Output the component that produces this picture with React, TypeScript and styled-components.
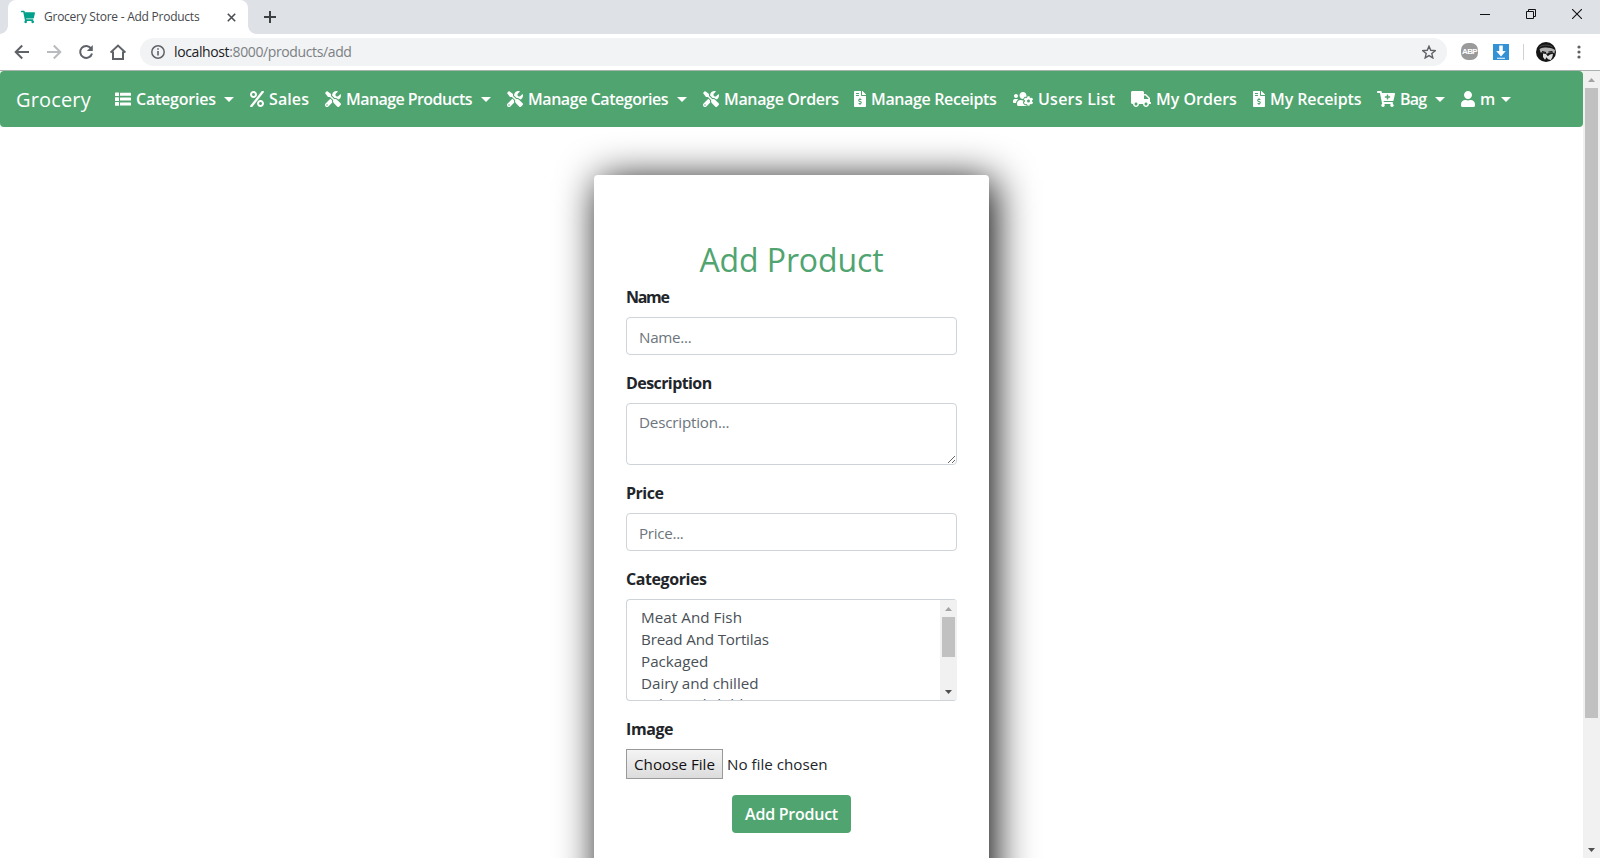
import React from 'react';
import styled, { createGlobalStyle } from 'styled-components';
import {
  FaPercent,
  FaTools,
  FaFileInvoiceDollar,
  FaUsersCog,
  FaTruck,
  FaCartPlus,
  FaUser,
  FaShoppingCart,
} from 'react-icons/fa';

const green = '#50a46f';
const comic = '"Comic Sans MS", "Open Sans", sans-serif';
const segoe = '"Segoe UI", "Open Sans", sans-serif';

const GlobalStyle = createGlobalStyle`
  *, *::before, *::after { box-sizing: border-box; }
  body { margin: 0; background: #fff; font-family: ${segoe}; overflow: hidden; }
`;

const Window = styled.div`
  display: flex;
  flex-direction: column;
  width: 1600px;
  height: 858px;
  overflow: hidden;
`;

/* ---------- browser frame ---------- */

const TabStrip = styled.div`
  display: flex;
  height: 34px;
  padding-left: 8px;
  background: #dee1e6;
`;

const Tab = styled.div`
  position: relative;
  display: flex;
  align-items: center;
  width: 240px;
  height: 34px;
  padding: 0 12px 0 13px;
  background: #fff;
  border-radius: 8px 8px 0 0;
  color: #00a08a;

  &::before,
  &::after {
    content: '';
    position: absolute;
    bottom: 0;
    width: 8px;
    height: 8px;
  }
  &::before {
    left: -8px;
    background: radial-gradient(circle at 0 0, transparent 7.5px, #fff 8px);
  }
  &::after {
    right: -8px;
    background: radial-gradient(circle at 100% 0, transparent 7.5px, #fff 8px);
  }
`;

const TabTitle = styled.span`
  flex: 1;
  margin-left: 9px;
  color: #45494d;
  font-size: 12px;
  letter-spacing: -0.25px;
  line-height: 34px;
  white-space: nowrap;
`;

const NewTab = styled.div`
  display: flex;
  align-items: center;
  padding-left: 16px;
`;

const WindowButtons = styled.div`
  display: flex;
  gap: 36px;
  height: 28px;
  margin-left: auto;
  padding-right: 18px;
  align-items: center;
`;

const Toolbar = styled.div`
  display: flex;
  align-items: center;
  height: 37px;
  padding: 0 0 1px 14px;
  background: #fff;
  border-bottom: 1px solid #a9b3ae;
`;

const NavButtons = styled.div`
  display: flex;
  gap: 16px;
  margin-right: 14px;
`;

const AddressBar = styled.div`
  display: flex;
  align-items: center;
  width: 1307px;
  height: 28px;
  padding: 0 11px 0 11px;
  border-radius: 14px;
  background: #f1f3f4;
`;

const Url = styled.span`
  flex: 1;
  margin-left: 9px;
  color: #7c8084;
  font-size: 14px;
  letter-spacing: -0.38px;
  line-height: 28px;

  b {
    color: #202124;
    font-weight: 400;
  }
`;

const Extensions = styled.div`
  display: flex;
  align-items: center;
  margin-left: 14px;
`;

const Divider = styled.div`
  width: 1px;
  height: 16px;
  margin: 0 12px 0 14px;
  background: #cfd1d4;
`;

const AdBadge = styled.span`
  display: flex;
  align-items: center;
  justify-content: center;
  width: 17px;
  height: 17px;
  margin-right: 15px;
  border-radius: 7px;
  background: #9a9a9a;
  color: #fff;
  font: 700 8px 'Liberation Sans', sans-serif;
  letter-spacing: -0.6px;
`;

/* ---------- page ---------- */

const Viewport = styled.div`
  display: flex;
  flex: 1;
  min-height: 0;
`;

const Page = styled.div`
  flex: 1;
  overflow: hidden;
`;

const NavBar = styled.nav`
  display: flex;
  align-items: center;
  height: 56px;
  padding: 0 16px;
  border-radius: 4px;
  background: ${green};
  color: #fff;
  font-family: ${comic};
`;

const Brand = styled.span`
  width: 75px;
  margin-right: 16px;
  font-size: 20px;
  font-weight: 500;
  letter-spacing: 0.15px;
  line-height: 30px;
  padding-top: 1px;
`;

const NavItem = styled.span`
  display: flex;
  align-items: center;
  padding: 0 8px;
`;

const NavIcon = styled.span<{ $width: number }>`
  display: flex;

  svg {
    width: ${(p) => p.$width}px;
    height: 16px;
  }
`;

const NavText = styled.span<{ $width: number; $spacing: number }>`
  width: ${(p) => p.$width}px;
  margin-left: 5px;
  font-size: 16px;
  font-weight: 600;
  line-height: 24px;
  letter-spacing: ${(p) => p.$spacing}px;
  white-space: nowrap;
`;

const Caret = styled.span`
  margin-left: 9px;
  border: 5px solid transparent;
  border-top-color: #fff;
  border-bottom: 0;
`;

const Card = styled.form`
  width: 395px;
  height: 760px;
  margin: 48px auto 0;
  padding: 64px 32px;
  border-radius: 4px;
  background: #fff;
  box-shadow: 5px 5px 40px #000;
`;

const Title = styled.h2`
  margin: 0 0 6px;
  padding-top: 2px;
  color: ${green};
  font: 400 32px/38px ${comic};
  letter-spacing: -0.1px;
  text-align: center;
`;

const Field = styled.div`
  display: flex;
  flex-direction: column;
  margin-bottom: 16px;
`;

const Label = styled.label<{ $spacing: number }>`
  margin-bottom: 8px;
  color: #212529;
  font: 700 16px/24px ${comic};
  letter-spacing: ${(p) => p.$spacing}px;
`;

const Input = styled.input`
  height: 38px;
  padding: 7px 12px 5px;
  border: 1px solid #ced4da;
  border-radius: 4px;
  font: 400 15.2px/24px ${segoe};
  letter-spacing: -0.3px;
  outline: 0;

  &::placeholder { color: #6c757d; opacity: 1; }
`;

const TextArea = styled.textarea`
  height: 62px;
  padding: 6px 12px;
  border: 1px solid #ced4da;
  border-radius: 4px;
  font: 400 15.2px/24px ${segoe};
  letter-spacing: -0.2px;
  outline: 0;
  resize: vertical;

  &::placeholder { color: #6c757d; opacity: 1; }
`;

const ListBox = styled.div`
  display: flex;
  height: 102px;
  border: 1px solid #ced4da;
  border-right: 0;
  border-radius: 4px;
  overflow: hidden;
`;

const Options = styled.div`
  flex: 1;
  padding: 6px 14px;
`;

const Option = styled.div<{ $spacing?: number; $rise?: number }>`
  margin-top: ${(p) => -(p.$rise ?? 0)}px;
  color: #495057;
  font-size: 15.2px;
  line-height: 22px;
  letter-spacing: ${(p) => p.$spacing ?? 0}px;
`;

const Track = styled.div`
  display: flex;
  flex-direction: column;
  align-items: center;
  width: 17px;
  background: #f1f1f1;
`;

const ArrowCell = styled.div<{ $last?: boolean }>`
  display: flex;
  align-items: center;
  justify-content: center;
  height: 17px;
  margin-top: ${(p) => (p.$last ? 'auto' : '0')};
`;

const Thumb = styled.div<{ $height: number }>`
  width: 13px;
  height: ${(p) => p.$height}px;
  background: #c1c1c1;
`;

const FileRow = styled.div`
  display: flex;
  align-items: center;
  gap: 4px;
  height: 30px;
  color: #212529;
  font-size: 15.2px;
`;

const FileButton = styled.button`
  width: 97px;
  height: 30px;
  padding: 0;
  border: 1px solid #999;
  border-radius: 0;
  background: linear-gradient(#f4f4f4, #dcdcdc);
  color: #111;
  font: 400 15.2px/24px ${segoe};
`;

const Submit = styled.button`
  display: block;
  width: 119px;
  height: 38px;
  margin: 0 auto;
  padding: 0;
  border: 0;
  border-radius: 4px;
  background: ${green};
  color: #fff;
  font: 600 16px/24px ${comic};
  letter-spacing: -0.25px;
`;

const ListIcon = () => (
  <svg viewBox="0 0 16 16" fill="currentColor">
    <rect x="0" y="1.500" width="4" height="3.600" rx=".5" />
    <rect x="0" y="6.300" width="4" height="3.600" rx=".5" />
    <rect x="0" y="11.100" width="4" height="3.600" rx=".5" />
    <rect x="5" y="1.800" width="11" height="3" rx=".5" />
    <rect x="5" y="6.600" width="11" height="3" rx=".5" />
    <rect x="5" y="11.400" width="11" height="3" rx=".5" />
  </svg>
);

type Entry = {
  icon: React.ComponentType;
  iw: number;
  text: string;
  w: number;
  ls: number;
  caret?: boolean;
};

const entries: Entry[] = [
  { icon: ListIcon, iw: 16, text: 'Categories', w: 79, ls: -0.22, caret: true },
  { icon: FaPercent, iw: 14, text: 'Sales', w: 40, ls: 0.1 },
  { icon: FaTools, iw: 16, text: 'Manage Products', w: 126, ls: -0.57, caret: true },
  { icon: FaTools, iw: 16, text: 'Manage Categories', w: 140, ls: -0.44, caret: true },
  { icon: FaTools, iw: 16, text: 'Manage Orders', w: 114, ls: -0.34 },
  { icon: FaFileInvoiceDollar, iw: 12, text: 'Manage Receipts', w: 126, ls: -0.36 },
  { icon: FaUsersCog, iw: 20, text: 'Users List', w: 77, ls: 0.24 },
  { icon: FaTruck, iw: 20, text: 'My Orders', w: 81, ls: 0 },
  { icon: FaFileInvoiceDollar, iw: 12, text: 'My Receipts', w: 91, ls: -0.1 },
  { icon: FaCartPlus, iw: 18, text: 'Bag', w: 26, ls: -0.8, caret: true },
  { icon: FaUser, iw: 14, text: 'm', w: 12, ls: 0, caret: true },
];

const Arrow = ({ up, color }: { up?: boolean; color: string }) => (
  <svg width="7" height="4" viewBox="0 0 7 4">
    <path d={up ? 'M0 4h7L3.5 0z' : 'M0 0h7L3.5 4z'} fill={color} />
  </svg>
);

const Scrollbar = ({ thumb }: { thumb: number }) => (
  <Track>
    <ArrowCell><Arrow up color="#a3a3a3" /></ArrowCell>
    <Thumb $height={thumb} />
    <ArrowCell $last><Arrow color="#505050" /></ArrowCell>
  </Track>
);

const MenuDots = styled.svg`
  margin-left: 21px;
  fill: #5f6368;
`;

const stroke = { fill: 'none', stroke: '#5f6368', strokeWidth: 2 } as const;

const BrowserFrame = () => (
  <>
    <TabStrip>
      <Tab>
        <FaShoppingCart size={14} />
        <TabTitle>Grocery Store - Add Products</TabTitle>
        <svg width="9" height="9" viewBox="0 0 9 9">
          <path d="M.8.8l7.4 7.4M8.2.8L.8 8.2" stroke="#4a4d51" strokeWidth="1.6" />
        </svg>
      </Tab>
      <NewTab>
        <svg width="12" height="12" viewBox="0 0 12 12">
          <path d="M6 0v12M0 6h12" stroke="#3c4043" strokeWidth="2" />
        </svg>
      </NewTab>
      <WindowButtons>
        <svg width="10" height="10" viewBox="0 0 10 10">
          <path d="M0 5.5h10" stroke="#111" />
        </svg>
        <svg width="10" height="10" viewBox="0 0 10 10">
          <path d="M.5 2.5h7v7h-7zM2.5 2.5v-2h7v7h-2" fill="none" stroke="#111" />
        </svg>
        <svg width="10" height="10" viewBox="0 0 10 10">
          <path d="M0 0l10 10M10 0L0 10" stroke="#111" strokeWidth="1.1" />
        </svg>
      </WindowButtons>
    </TabStrip>
    <Toolbar>
      <NavButtons>
        <svg width="16" height="16" viewBox="0 0 16 16" {...stroke}>
          <path d="M15 8H2M8.200 1.500L1.700 8l6.500 6.500" />
        </svg>
        <svg width="16" height="16" viewBox="0 0 16 16" {...stroke} stroke="#b9bbbe">
          <path d="M1 8h13M7.800 1.500L14.300 8l-6.500 6.500" />
        </svg>
        <svg width="16" height="16" viewBox="0 0 16 16" {...stroke}>
          <path d="M13.200 4.600A6 6 0 1 0 14 9.400" />
          <path d="M14.800 1v6h-6z" fill="#5f6368" stroke="none" />
        </svg>
        <svg width="16" height="16" viewBox="0 0 16 16" {...stroke}>
          <path d="M.6 8.600L8 1.600l7.400 7M3 7.500V15h10V7.500" />
        </svg>
      </NavButtons>
      <AddressBar>
        <svg width="14" height="14" viewBox="0 0 14 14">
          <circle cx="7" cy="7" r="6.200" fill="none" stroke="#5f6368" strokeWidth="1.500" />
          <path d="M7 3.200v1.600M7 6v4.600" stroke="#5f6368" strokeWidth="1.600" />
        </svg>
        <Url><b>localhost</b>:8000/products/add</Url>
        <svg width="14" height="14" viewBox="0 0 24 24">
          <path
            d="M12 2l3 7 7.600.7-5.800 5 1.800 7.500L12 18.200l-6.600 4 1.800-7.500-5.800-5L9 9z"
            fill="none"
            stroke="#5f6368"
            strokeWidth="2.400"
          />
        </svg>
      </AddressBar>
      <Extensions>
        <AdBadge>ABP</AdBadge>
        <svg width="16" height="16" viewBox="0 0 16 16">
          <path d="M0 0h16v16H0z" fill="#3391d6" />
          <path d="M6.200 1.500h3.600v5.500h3L8 12.500 3.200 7h3zM4 13.700h8v1H4z" fill="#fff" />
        </svg>
        <Divider />
        <svg width="20" height="20" viewBox="0 0 20 20">
          <circle cx="10" cy="10" r="10" fill="#151515" />
          <path d="M3.500 7C8 5 14 5 19 8l-.5 3.500-2-1.200-4 .4-1.500 1-3-1.400-3.500.2z" fill="#b0b0b0" />
          <path d="M7 11.500l3 .5 1.800 2.200 2.200-1.700 3-.8-.6 3.300-1.600 3-2.800-.8-1.500-2-1.500 2.500-2-2.700z" fill="#dedede" />
          <path d="M6 9.600l4 .9M12.500 10l4-.4" stroke="#111" strokeWidth="1.200" />
          <path d="M3.500 5C7 2.500 13 2.500 16.500 5" fill="none" stroke="#4a4a4a" />
        </svg>
        <MenuDots width="4" height="16" viewBox="0 0 4 16">
          <circle cx="2" cy="3" r="1.600" />
          <circle cx="2" cy="8" r="1.600" />
          <circle cx="2" cy="13" r="1.600" />
        </MenuDots>
      </Extensions>
    </Toolbar>
  </>
);

export default function App() {
  return (
    <Window>
      <GlobalStyle />
      <BrowserFrame />
      <Viewport>
        <Page>
          <NavBar>
            <Brand>Grocery</Brand>
            {entries.map(({ icon: Icon, iw, text, w, ls, caret }) => (
              <NavItem key={text}>
                <NavIcon $width={iw}><Icon /></NavIcon>
                <NavText $width={w} $spacing={ls}>{text}</NavText>
                {caret && <Caret />}
              </NavItem>
            ))}
          </NavBar>
          <Card>
            <Title>Add Product</Title>
            <Field>
              <Label $spacing={-1.3}>Name</Label>
              <Input placeholder="Name..." />
            </Field>
            <Field>
              <Label $spacing={-0.58}>Description</Label>
              <TextArea placeholder="Description..." />
            </Field>
            <Field>
              <Label $spacing={-0.5}>Price</Label>
              <Input placeholder="Price..." />
            </Field>
            <Field>
              <Label $spacing={-0.42}>Categories</Label>
              <ListBox>
                <Options>
                  <Option $spacing={0.05}>Meat And Fish</Option>
                  <Option $spacing={-0.17}>Bread And Tortilas</Option>
                  <Option>Packaged</Option>
                  <Option $spacing={-0.03}>Dairy and chilled</Option>
                  <Option $spacing={-0.1} $rise={1}>Baby and children</Option>
                </Options>
                <Scrollbar thumb={40} />
              </ListBox>
            </Field>
            <Field>
              <Label $spacing={-0.4}>Image</Label>
              <FileRow>
                <FileButton type="button">Choose File</FileButton>
                <span>No file chosen</span>
              </FileRow>
            </Field>
            <Submit type="button">Add Product</Submit>
          </Card>
        </Page>
        <Scrollbar thumb={630} />
      </Viewport>
    </Window>
  );
}
